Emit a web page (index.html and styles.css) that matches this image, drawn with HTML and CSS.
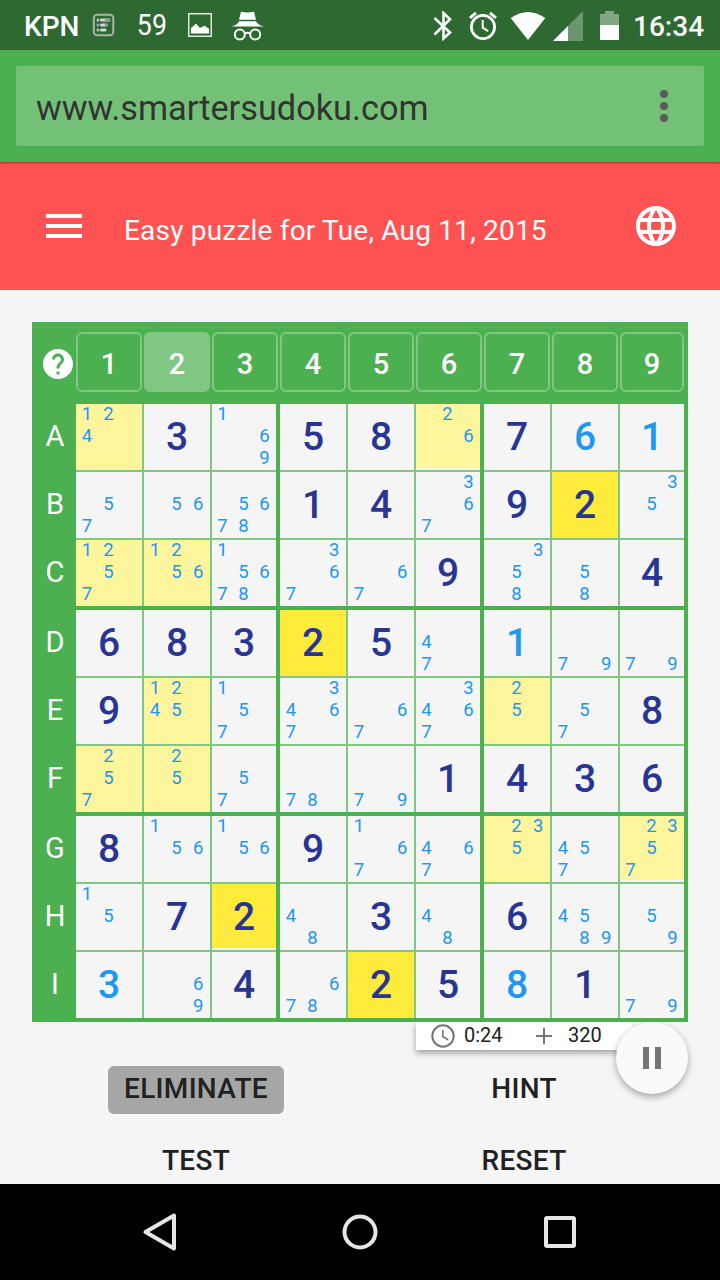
FILE: index.html
```html
<!DOCTYPE html>
<html lang="en">
<head>
    <meta charset="UTF-8">
    <meta name="viewport" content="width=device-width, initial-scale=1.0">
    <title>Smarter Sudoku</title>
    <link rel="stylesheet" href="styles.css">
</head>
<body>
    <!-- Status bar -->
    <div class="status-bar">
        <span class="carrier">KPN</span>
        <svg class="icon-list" width="24" height="26" viewBox="0 0 24 26">
            <rect x="1.8" y="2.8" width="19.5" height="20.5" rx="3.5" fill="none" stroke="#a9b5a9" stroke-width="2"/>
            <path d="M9.500 8H17M9.500 13H14M9.500 18H13" stroke="#d3d8d3" stroke-width="3" stroke-linecap="round"/>
            <path d="M14 8h3M14 13h1" stroke="#8f988f" stroke-width="2.600" stroke-linecap="round"/>
            <circle cx="6" cy="8" r="1.5" fill="#c5ccc5"/>
            <circle cx="6" cy="13" r="1.5" fill="#7fb5b8"/>
            <circle cx="6" cy="18" r="1.5" fill="#c5ccc5"/>
        </svg>
        <span class="temperature">59</span>
        <svg class="icon-image" width="24" height="24" viewBox="0 0 24 24">
            <rect x=".75" y=".75" width="22.5" height="22.5" fill="none" stroke="#dfe8df" stroke-width="1.5"/>
            <path d="M3 20.5V15l5-4.2 4 4.2 4.5-2.2 4.5 3v4.700z" fill="#fff"/>
        </svg>
        <svg class="icon-incognito" width="34" height="30" viewBox="0 0 34 30">
            <path d="M10 .8q6.500 1.600 13 0l2 8H8z" fill="#fff"/>
            <path d="M.5 15.500Q7 13.500 8 10.300h17q1 3.200 8 5.200z" fill="#fff"/>
            <g fill="none" stroke="#fff" stroke-width="2">
                <circle cx="8.800" cy="23.500" r="5"/>
                <circle cx="24.200" cy="23.500" r="5"/>
                <path d="M13.500 22.500q3-1.500 6 0"/>
            </g>
        </svg>
        <div class="status-right">
            <svg class="icon-bluetooth" width="20" height="30" viewBox="0 0 20 30">
                <path d="M1.500 7L17 21.500 10.500 27.500V2L17 8.200 1.500 23.500" fill="none" stroke="#fff" stroke-width="2.600"/>
            </svg>
            <svg class="icon-alarm" width="28" height="30" viewBox="0 0 28 30">
                <circle cx="14" cy="16" r="11.600" fill="none" stroke="#fff" stroke-width="2.700"/>
                <path d="M1 6.800L7 1.800M27 6.800L21 1.800" stroke="#fff" stroke-width="2.800"/>
                <path d="M13.700 9v7.700l5.500 3.500" fill="none" stroke="#fff" stroke-width="2"/>
            </svg>
            <svg class="icon-wifi" width="36" height="30" viewBox="0 0 36 30">
                <path d="M.7 7Q18-5 35.300 7L18 29z" fill="#fff"/>
            </svg>
            <svg class="icon-signal" width="30" height="30" viewBox="0 0 30 30">
                <path d="M0 30L30 0v30z" fill="#6d9670"/>
                <path d="M0 30L15 15v15z" fill="#fff"/>
            </svg>
            <svg class="icon-battery" width="19" height="29" viewBox="0 0 19 29">
                <path d="M0 3h5V0h9v3h5v11H0z" fill="#83a685"/>
                <path d="M0 14h19v15H0z" fill="#fff"/>
            </svg>
            <span class="clock">16:34</span>
        </div>
    </div>

    <!-- Address bar -->
    <div class="browser-bar">
        <div class="url-box">
            <span class="url">www.smartersudoku.com</span>
            <div class="dots"><i></i><i></i><i></i></div>
        </div>
    </div>

    <header class="app-header">
        <div class="burger"><i></i><i></i><i></i></div>
        <h1>Easy puzzle for Tue, Aug 11, 2015</h1>
        <svg class="globe" width="48" height="48" viewBox="0 0 24 24">
            <path fill="#fff" d="M11.990 2C6.470 2 2 6.480 2 12s4.470 10 9.990 10C17.520 22 22 17.520 22 12S17.520 2 11.990 2zm6.930 6h-2.950c-.32-1.250-.78-2.450-1.380-3.560 1.840.63 3.370 1.910 4.330 3.560zM12 4.040c.83 1.200 1.480 2.530 1.910 3.960h-3.820c.43-1.430 1.080-2.760 1.910-3.960zM4.260 14C4.100 13.360 4 12.690 4 12s.1-1.360.26-2h3.380c-.08.66-.14 1.320-.14 2 0 .68.06 1.340.14 2H4.260zm.82 2h2.950c.32 1.250.78 2.450 1.380 3.560-1.840-.63-3.370-1.900-4.330-3.560zm2.950-8H5.080c.96-1.660 2.490-2.930 4.330-3.560C8.810 5.550 8.350 6.750 8.030 8zM12 19.960c-.83-1.200-1.480-2.530-1.910-3.960h3.820c-.43 1.430-1.080 2.760-1.910 3.960zM14.340 14H9.660c-.09-.66-.16-1.320-.16-2 0-.68.07-1.350.16-2h4.680c.09.65.16 1.320.16 2 0 .68-.07 1.340-.16 2zm.25 5.560c.6-1.110 1.060-2.310 1.380-3.560h2.950c-.96 1.650-2.490 2.930-4.330 3.560zM16.360 14c.08-.66.14-1.320.14-2 0-.68-.06-1.340-.14-2h3.380c.16.64.26 1.310.26 2s-.1 1.360-.26 2h-3.380z"/>
        </svg>
    </header>

    <main>
        <div class="sudoku">
            <div class="digit-row">
                <div class="help">
                    <svg width="30" height="30" viewBox="2 2 20 20">
                        <path fill="#fff" d="M12 2C6.480 2 2 6.480 2 12s4.480 10 10 10 10-4.480 10-10S17.520 2 12 2zm1 17h-2v-2h2v2zm2.070-7.750l-.9.920C13.450 12.900 13 13.500 13 15h-2v-.5c0-1.100.45-2.100 1.170-2.830l1.240-1.260c.37-.36.59-.86.59-1.410 0-1.100-.9-2-2-2s-2 .9-2 2H8c0-2.210 1.790-4 4-4s4 1.790 4 4c0 .88-.36 1.680-.93 2.250z"/>
                    </svg>
                </div>
                <button>1</button>
                <button class="selected">2</button>
                <button>3</button>
                <button>4</button>
                <button>5</button>
                <button>6</button>
                <button>7</button>
                <button>8</button>
                <button>9</button>
            </div>
            <div class="board" id="board"></div>
        </div>

        <div class="score-row">
            <div class="score">
                <svg class="timer-icon" width="24" height="24" viewBox="0 0 24 24">
                    <circle cx="12" cy="12" r="10.700" fill="none" stroke="#757575" stroke-width="2"/>
                    <path d="M11.800 6v6.500l5.400 3.200" fill="none" stroke="#757575" stroke-width="1.600"/>
                </svg>
                <span class="time">0:24</span>
                <svg class="plus-icon" width="18" height="18" viewBox="0 0 18 18">
                    <path d="M1 9h16M9 1v16" stroke="#757575" stroke-width="2"/>
                </svg>
                <span class="points">320</span>
            </div>
            <div class="pause"><i></i><i></i></div>
        </div>

        <div class="actions">
            <button class="active">ELIMINATE</button>
            <button>HINT</button>
            <button>TEST</button>
            <button>RESET</button>
        </div>
    </main>

    <!-- Android navigation -->
    <nav class="nav-bar">
        <svg width="40" height="40" viewBox="0 0 40 40"><path d="M34 3.500v33L5.500 20z"/></svg>
        <svg width="40" height="40" viewBox="0 0 40 40"><circle cx="20" cy="20" r="15.500"/></svg>
        <svg width="40" height="40" viewBox="0 0 40 40"><rect x="6" y="6" width="28" height="28" rx="1"/></svg>
    </nav>

    <script src="script.js"></script>
</body>
</html>
```
FILE: styles.css
```css
* {
    margin: 0;
    padding: 0;
    box-sizing: border-box;
}

body {
    width: 720px;
    height: 1280px;
    overflow: hidden;
    background: #f5f5f5;
    font-family: Roboto, "Noto Sans", sans-serif;
    display: flex;
    flex-direction: column;
}

button {
    border: none;
    background: none;
    font-family: inherit;
}

svg {
    display: block;
    flex: none;
}

/* Status bar */
.status-bar {
    height: 50px;
    padding: 2px 16px 0 24px;
    background: #2e6931;
    color: #fff;
    display: flex;
    align-items: center;
}

.carrier,
.clock {
    font-size: 28px;
    font-weight: 500;
}

.carrier {
    width: 68px;
}

.icon-list {
    margin-top: -2px;
}

.temperature {
    width: 34px;
    margin-left: 19px;
    margin-top: -3px;
    font-size: 30px;
    transform: scaleX(.89);
}

.icon-image {
    margin-left: 19px;
    margin-top: -2px;
}

.icon-incognito {
    margin-left: 19px;
    margin-top: -1px;
}

.status-right {
    margin-left: auto;
    display: flex;
    align-items: center;
}

.status-right svg {
    margin-top: -1px;
}

.icon-alarm {
    margin-left: 16px;
}

.icon-wifi {
    margin-left: 13px;
}

.icon-signal {
    margin-left: 7px;
}

.icon-battery {
    margin-left: 17px;
}

.clock {
    width: 71px;
    margin-left: 14px;
}

/* Address bar */
.browser-bar {
    position: relative;
    height: 112px;
    padding: 16px;
    background: #4caf50;
    box-shadow: 0 1px 2px rgba(0, 0, 0, .4);
}

.url-box {
    height: 80px;
    padding: 2px 36px 0 20px;
    border-radius: 2px;
    background: #73c176;
    box-shadow: 0 1px 1px rgba(0, 0, 0, .06);
    display: flex;
    align-items: center;
    justify-content: space-between;
}

.url {
    padding-top: 1px;
    font-size: 34.3px;
    color: #333;
}

.dots {
    display: flex;
    flex-direction: column;
    gap: 4px;
    margin-top: -2px;
}

.dots i {
    width: 8px;
    height: 8px;
    border-radius: 50%;
    background: #5c5c5c;
}

.app-header {
    height: 128px;
    padding: 0 40px 0 46px;
    background: #ff5353;
    color: #fff;
    display: flex;
    align-items: center;
}

.burger {
    width: 36px;
    display: flex;
    flex-direction: column;
    gap: 6px;
}

.burger i {
    height: 4px;
    background: #fff;
}

.app-header h1 {
    margin-left: 42px;
    padding-top: 9px;
    font-size: 28px;
    font-weight: 400;
    letter-spacing: .2px;
    white-space: nowrap;
}

.globe {
    margin-left: auto;
}

main {
    height: 894px;
    padding: 32px 32px 0;
}

/* Board */
.sudoku {
    height: 700px;
    background: #4caf50;
    color: #fff;
}

.digit-row {
    height: 82px;
    padding: 10px 0 12px;
    display: flex;
}

.help {
    width: 44px;
    padding: 4px 0 0 10.5px;
    display: flex;
    align-items: center;
}

.digit-row button {
    width: 66px;
    height: 60px;
    margin-right: 2px;
    padding-top: 3px;
    border: 2px solid #81c784;
    border-radius: 6px;
    color: #fff;
    font-size: 29px;
    font-weight: 500;
}

.digit-row button:last-child {
    width: 64px;
}

.digit-row .selected {
    background: #81c784;
}

.board {
    display: grid;
    grid-template-columns: 44px repeat(9, 68px);
    grid-template-rows: repeat(3, 68px 68px 70px);
}

.row-label {
    padding-left: 2px;
    font-size: 29px;
    line-height: 65px;
    text-align: center;
}

/* the padding shows through as the thin grid line */
.cell {
    padding: 0 2px 2px 0;
    background: #81c784;
    color: #283593;
}

.cell.block-right {
    margin-right: 4px;
    padding-right: 0;
}

.cell.block-bottom {
    margin-bottom: 4px;
    padding-bottom: 0;
}

.inner {
    height: 66px;
    background: #f5f5f5;
}

.block-right .inner {
    height: 64px;
    box-shadow: 0 2px #f5f5f5;
}

.pair .inner {
    background: #fff59d;
}

.match .inner {
    background: #ffeb3b;
}

.value {
    font-size: 39px;
    font-weight: 500;
    line-height: 66px;
    text-align: center;
}

.user {
    color: #2196f3;
}

.notes {
    padding-right: 1px;
    display: grid;
    grid-template-columns: repeat(3, 1fr);
    grid-template-rows: repeat(3, 22px);
    color: #2196f3;
    font-size: 18.5px;
    line-height: 20px;
    text-align: center;
}

/* Timer and score */
.score-row {
    height: 44px;
    padding-left: 384px;
    display: flex;
    align-items: flex-start;
}

.score {
    width: 216px;
    height: 28px;
    padding-left: 15px;
    background: #fff;
    box-shadow: 0 3px 6px rgba(0, 0, 0, .35);
    clip-path: inset(0 0 -12px -8px);
    color: #212121;
    font-size: 20px;
    line-height: 26px;
    display: flex;
    align-items: center;
}

.time,
.points {
    padding-bottom: 2px;
}

.time {
    width: 71px;
    margin-left: 9px;
}

.points {
    margin-left: 15px;
}

.pause {
    position: relative;
    width: 72px;
    height: 72px;
    margin-left: -16px;
    border-radius: 50%;
    background: #fafafa;
    box-shadow: 0 3px 7px rgba(0, 0, 0, .33);
    clip-path: inset(0 -12px -14px -12px);
    display: flex;
    align-items: center;
    justify-content: center;
    gap: 6px;
}

.pause i {
    width: 6px;
    height: 22px;
    background: #757575;
}

.actions {
    display: grid;
    grid-template-columns: 328px 328px;
    grid-template-rows: 48px 48px;
    row-gap: 24px;
    justify-items: center;
}

.actions button {
    width: 176px;
    height: 48px;
    padding-bottom: 3px;
    border-radius: 6px;
    color: #212121;
    font-size: 28px;
    font-weight: 500;
    letter-spacing: .3px;
}

.actions .active {
    background: #a6a6a6;
}

/* Navigation bar */
.nav-bar {
    height: 96px;
    padding: 0 140px;
    background: #000;
    display: flex;
    align-items: center;
    justify-content: space-between;
}

.nav-bar svg {
    fill: none;
    stroke: #e6e6e6;
    stroke-width: 4;
    stroke-linejoin: round;
}
```
FILE: script.js
```js
// "=" puzzle digit, "+" digit filled in by the player, otherwise pencil marks
var rows = {
    A: '124 =3 169 =5 =8 26 =7 +6 +1',
    B: '57 56 5678 =1 =4 367 =9 =2 35',
    C: '1257 1256 15678 367 67 =9 358 58 =4',
    D: '=6 =8 =3 =2 =5 47 +1 79 79',
    E: '=9 1245 157 3467 67 3467 25 57 =8',
    F: '257 25 57 78 79 =1 =4 =3 =6',
    G: '=8 156 156 =9 167 467 235 457 2357',
    H: '15 =7 =2 48 =3 48 =6 4589 59',
    I: '+3 69 =4 678 =2 =5 +8 =1 79'
};
var selected = '2';
var board = document.getElementById('board');

Object.keys(rows).forEach(function(name, r) {
    var label = document.createElement('div');
    label.className = 'row-label';
    label.textContent = name;
    board.appendChild(label);

    rows[name].split(' ').forEach(function(entry, c) {
        var cell = document.createElement('div');
        var inner = document.createElement('div');
        var isNotes = /^\d/.test(entry);
        cell.className = 'cell';
        if (c % 3 === 2) cell.classList.add('block-right');
        if (r % 3 === 2) cell.classList.add('block-bottom');
        if (entry.indexOf(selected) >= 0) cell.classList.add(isNotes ? 'pair' : 'match');

        if (isNotes) {
            inner.className = 'inner notes';
            for (var n = 1; n <= 9; n++) {
                var mark = document.createElement('span');
                if (entry.indexOf(n) >= 0) mark.textContent = n;
                inner.appendChild(mark);
            }
        } else {
            inner.className = 'inner value';
            if (entry[0] === '+') inner.classList.add('user');
            inner.textContent = entry[1];
        }
        cell.appendChild(inner);
        board.appendChild(cell);
    });
});
```
